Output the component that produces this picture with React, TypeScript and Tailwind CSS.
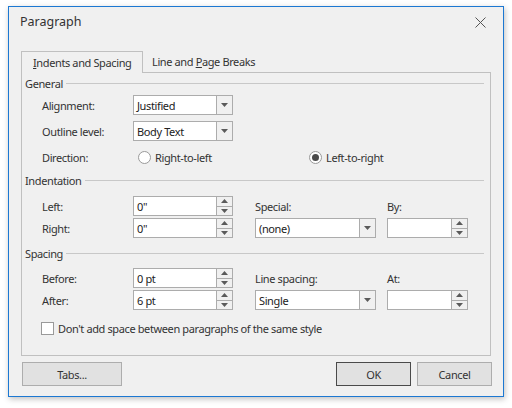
import React from "react";

const Down = () => (
  <svg width="7" height="4" viewBox="0 0 7 4"><path d="M0 0H7L3.5 4Z" fill="#5a5a5a" /></svg>
);
const Up = () => (
  <svg width="7" height="4" viewBox="0 0 7 4"><path d="M0 4H7L3.5 0Z" fill="#5a5a5a" /></svg>
);

function Combo({ value, w }: { value: string; w: string }) {
  return (
    <div className={`${w} h-[20px] flex border border-[#acacac] bg-white`}>
      <div className="flex-1 flex items-center pl-[3px] text-[#222]">{value}</div>
      <div className="w-[16px] flex items-center justify-center border-l border-[#acacac] bg-[#f0f0f0]">
        <Down />
      </div>
    </div>
  );
}

function Spin({ value, w }: { value: string; w: string }) {
  return (
    <div className={`${w} h-[20px] flex border border-[#acacac] bg-white`}>
      <div className="flex-1 flex items-center pl-[3px] text-[#222]">{value}</div>
      <div className="w-[16px] flex flex-col border-l border-[#acacac] bg-[#f0f0f0]">
        <div className="flex-1 flex items-center justify-center border-b border-[#acacac]"><Up /></div>
        <div className="flex-1 flex items-center justify-center"><Down /></div>
      </div>
    </div>
  );
}

function Radio({ checked }: { checked?: boolean }) {
  return (
    <div className="w-[13px] h-[13px] rounded-full border border-[#9a9a9a] bg-white flex items-center justify-center">
      {checked && <div className="w-[7px] h-[7px] rounded-full bg-[#4a4a4a]" />}
    </div>
  );
}

function Header({ text }: { text: string }) {
  return (
    <div className="h-[16px] flex items-center pl-[3px] pr-[6px]">
      <span>{text}</span>
      <div className="flex-1 h-px bg-[#c8c8c8] ml-[3px]" />
    </div>
  );
}

export default function App() {
  return (
    <div
      className="w-[512px] h-[408px] bg-white pl-[8px] pt-[6px] text-[11px] text-[#333] leading-none tracking-[-0.38px]"
      style={{ fontFamily: '"Segoe UI", "Noto Sans", sans-serif' }}
    >
      <div className="w-[496px] h-[391px] border border-[#1c78d2] bg-[#f0f0f0] flex flex-col shadow-[1px_2px_6px_rgba(0,0,0,0.25)]">
        {/* Title bar */}
        <div className="h-[30px] flex items-center justify-between pl-[11px] pr-[17px]">
          <span className="text-[12.5px] tracking-normal text-[#333]">Paragraph</span>
          <svg width="11" height="11" viewBox="0 0 11 11">
            <path d="M0.5 0.5L10.5 10.5M10.5 0.5L0.5 10.5" stroke="#555" strokeWidth="1" />
          </svg>
        </div>

        {/* Tab control */}
        <div className="mt-[14px] mx-[12px] flex flex-col">
          <div className="flex h-[21px] items-stretch">
            <div className="w-[122px] h-[22px] relative z-10 border border-b-0 border-[#c0c0c0] bg-[#f0f0f0] flex items-center pl-[11px]">
              <span><span className="underline">I</span>ndents and Spacing</span>
            </div>
            <div className="flex items-center pl-[9px]">
              <span>Line and <span className="underline">P</span>age Breaks</span>
            </div>
          </div>
          <div className="h-[284px] border border-[#c0c0c0] flex flex-col">
            <div className="mt-[2px]"><Header text="General" /></div>
            <div className="pl-[20px] flex flex-col">
              <div className="mt-[4px] h-[20px] flex items-center">
                <div className="w-[91px]">Alignment:</div>
                <Combo value="Justified" w="w-[100px]" />
              </div>
              <div className="mt-[6px] h-[20px] flex items-center">
                <div className="w-[91px]">Outline level:</div>
                <Combo value="Body Text" w="w-[100px]" />
              </div>
              <div className="mt-[6px] h-[20px] flex items-center">
                <div className="w-[96px]">Direction:</div>
                <div className="w-[171px] flex items-center gap-[4px]">
                  <Radio />
                  <span>Right-to-left</span>
                </div>
                <div className="flex items-center gap-[4px]">
                  <Radio checked />
                  <span>Left-to-right</span>
                </div>
              </div>
            </div>
            <div className="mt-[5px]"><Header text="Indentation" /></div>
            <div className="pl-[20px] flex flex-col">
              <div className="mt-[8px] h-[20px] flex items-center">
                <div className="w-[91px]">Left:</div>
                <Spin value={'0"'} w="w-[100px]" />
                <div className="ml-[22px] w-[121px]">Special:</div>
                <div className="ml-[11px]">By:</div>
              </div>
              <div className="mt-[2px] h-[20px] flex items-center">
                <div className="w-[91px]">Right:</div>
                <Spin value={'0"'} w="w-[100px]" />
                <div className="ml-[22px]"><Combo value="(none)" w="w-[121px]" /></div>
                <div className="ml-[11px]"><Spin value="" w="w-[81px]" /></div>
              </div>
            </div>
            <div className="mt-[7px]"><Header text="Spacing" /></div>
            <div className="pl-[20px] flex flex-col">
              <div className="mt-[7px] h-[20px] flex items-center">
                <div className="w-[91px]">Before:</div>
                <Spin value="0 pt" w="w-[100px]" />
                <div className="ml-[22px] w-[121px]">Line spacing:</div>
                <div className="ml-[11px]">At:</div>
              </div>
              <div className="mt-[2px] h-[20px] flex items-center">
                <div className="w-[91px]">After:</div>
                <Spin value="6 pt" w="w-[100px]" />
                <div className="ml-[22px]"><Combo value="Single" w="w-[121px]" /></div>
                <div className="ml-[11px]"><Spin value="" w="w-[81px]" /></div>
              </div>
              <div className="mt-[12px] h-[13px] flex items-center -ml-[1px] gap-[4px]">
                <div className="w-[13px] h-[13px] border border-[#9a9a9a] bg-white" />
                <span>Don't add space between paragraphs of the same style</span>
              </div>
            </div>
          </div>
        </div>

        {/* Buttons */}
        <div className="mt-[6px] pl-[13px] pr-[11px] flex items-center">
          <div className="w-[100px] h-[24px] border border-[#adadad] bg-[#e1e1e1] flex items-center justify-center">Tabs...</div>
          <div className="flex-1" />
          <div className="w-[75px] h-[24px] border border-[#4a4a4a] bg-[#e1e1e1] flex items-center justify-center">OK</div>
          <div className="ml-[6px] w-[75px] h-[24px] border border-[#adadad] bg-[#e1e1e1] flex items-center justify-center">Cancel</div>
        </div>
      </div>
    </div>
  );
}
